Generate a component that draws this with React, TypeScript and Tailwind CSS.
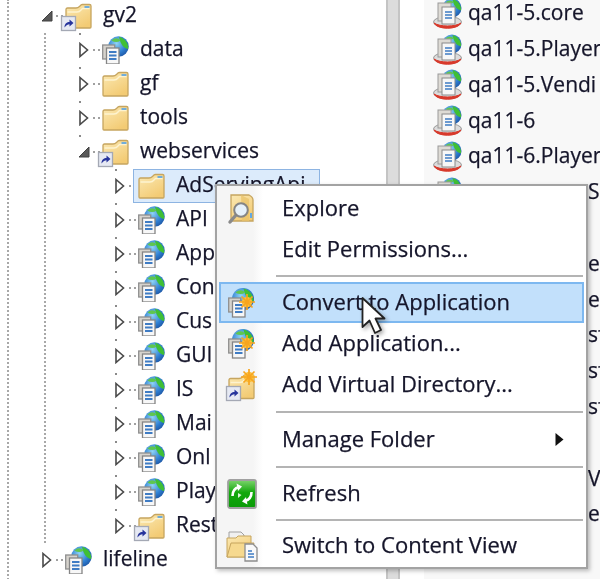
const Defs = () => (
    <svg className="absolute w-0 h-0" aria-hidden="true">
        <defs>
            <linearGradient id="folderFill" x1="0" y1="0" x2="0.6" y2="1">
                <stop offset="0" stopColor="#fbe9b4" />
                <stop offset="1" stopColor="#f3cb74" />
            </linearGradient>
            <radialGradient id="globeFill" cx="0.4" cy="0.35" r="0.75">
                <stop offset="0" stopColor="#8fd4f5" />
                <stop offset="0.6" stopColor="#2f7fd2" />
                <stop offset="1" stopColor="#1b4f9c" />
            </radialGradient>
            <linearGradient id="greenFill" x1="0" y1="0" x2="0" y2="1">
                <stop offset="0" stopColor="#7fd46f" />
                <stop offset="0.45" stopColor="#12a80c" />
                <stop offset="1" stopColor="#0a9a08" />
            </linearGradient>
        </defs>
    </svg>
);

const Folder = () => (
    <>
        <path d="M1 6 Q1 4.5 2.5 4.5 H11 Q13 4.5 14.5 3 L16 1.5 Q16.5 1 17.5 1 H24.5 Q26 1 26 2.5 V23.5 Q26 24.5 25 24.5 H2 Q1 24.5 1 23.5 Z" fill="url(#folderFill)" stroke="#c6a55f" strokeWidth="1.3" />
        <path d="M2.5 8.5 H12 Q14.5 8.5 16 6.5 L17.5 5 H24.5" stroke="#fdf3cf" strokeWidth="1.4" fill="none" />
        <rect x="19.5" y="2.6" width="5" height="1.8" fill="#62a8e2" />
    </>
);

const Badge = ({ x, y }: { x: number; y: number }) => (
    <g transform={`translate(${x} ${y})`}>
        <rect x="0.5" y="0.5" width="14" height="14" fill="#e6e9f3" stroke="#a4a8b4" strokeWidth="1.3" />
        <path d="M3.5 11.5 C3.5 7.5 6 6 8.5 6 V3.5 L12.5 7 L8.5 10.5 V8.2 C6.5 8.2 5.5 9 3.5 11.5 Z" fill="#27349c" />
    </g>
);

const FolderIcon = ({ shortcut }: { shortcut?: boolean }) => (
    <svg width="27" height="28" viewBox="0 0 27 28" className="shrink-0 overflow-visible">
        <g transform="translate(0 1.5)">
            <Folder />
        </g>
        {shortcut && <Badge x={-4} y={14} />}
    </svg>
);

const Globe = ({ cx, cy, r }: { cx: number; cy: number; r: number }) => (
    <g>
        <circle cx={cx} cy={cy} r={r} fill="url(#globeFill)" />
        <path
            d={`M${cx + r * 0.05} ${cy - r * 0.95} C${cx + r * 0.7} ${cy - r * 0.8} ${cx + r} ${cy - r * 0.2} ${cx + r * 0.95} ${cy + r * 0.25} C${cx + r * 0.6} ${cy + r * 0.2} ${cx + r * 0.2} ${cy - r * 0.1} ${cx + r * 0.05} ${cy - r * 0.95} Z`}
            fill="#3fbf35"
        />
        <path d={`M${cx - r * 0.7} ${cy - r * 0.6} Q${cx - r * 0.2} ${cy - r} ${cx + r * 0.2} ${cy - r * 0.6} Q${cx - r * 0.2} ${cy - r * 0.3} ${cx - r * 0.7} ${cy - r * 0.6} Z`} fill="#5fc64f" />
    </g>
);

const Pages = ({ x, y }: { x: number; y: number }) => (
    <g transform={`translate(${x} ${y})`}>
        <rect x="0.7" y="2" width="12" height="14" fill="#d6d3cd" stroke="#8f8f8f" strokeWidth="1.3" />
        <rect x="4.5" y="5" width="12.5" height="16" fill="#f7f7f7" stroke="#858585" strokeWidth="1.3" />
        <path d="M7 9 H14.5 M7 12.5 H14.5 M7 16 H14.5" stroke="#3f7cc4" strokeWidth="1.9" />
    </g>
);

const WebIcon = () => (
    <svg width="27" height="28" viewBox="0 0 27 28" className="shrink-0">
        <Globe cx={16.5} cy={10.5} r={10.2} />
        <Pages x={0} y={7} />
    </svg>
);

const Star = ({ cx, cy }: { cx: number; cy: number }) => (
    <g stroke="#f7a51f" strokeWidth="1.7">
        <circle cx={cx} cy={cy} r="5.2" fill="#fbbf3a" stroke="none" />
        <path d={`M${cx - 8} ${cy} H${cx + 8} M${cx} ${cy - 8} V${cy + 8} M${cx - 5.5} ${cy - 5.5} L${cx + 5.5} ${cy + 5.5} M${cx + 5.5} ${cy - 5.5} L${cx - 5.5} ${cy + 5.5}`} />
    </g>
);

const AppStarIcon = () => (
    <svg width="30" height="32" viewBox="0 0 30 32" className="shrink-0">
        <Globe cx={16} cy={12} r={11} />
        <Pages x={1} y={9} />
        <Star cx={20} cy={15} />
    </svg>
);

const VirtualDirIcon = () => (
    <svg width="32" height="32" viewBox="0 0 32 32" className="shrink-0 overflow-visible">
        <g transform="translate(2 5)">
            <Folder />
        </g>
        <Star cx={23} cy={8} />
        <Badge x={0} y={17} />
    </svg>
);

const ExploreIcon = () => (
    <svg width="30" height="32" viewBox="0 0 30 32" className="shrink-0">
        <path d="M4 2 H22 Q26 4 26 7 V28 H4 Z" fill="url(#folderFill)" stroke="#c6a55f" strokeWidth="1.3" />
        <path d="M14 2 L22 6 V28 H15 Z" fill="#eac36a" opacity="0.75" />
        <rect x="23" y="20" width="2" height="5" fill="#62a8e2" />
        <path d="M9 22 L3 29" stroke="#8a8a8a" strokeWidth="3.4" strokeLinecap="round" />
        <circle cx="14" cy="17" r="6.8" fill="#e6f1fa" stroke="#858585" strokeWidth="2" />
    </svg>
);

const RefreshIcon = () => (
    <svg width="30" height="30" viewBox="0 0 30 30" className="shrink-0">
        <rect x="1" y="1" width="28" height="28" rx="2" fill="url(#greenFill)" stroke="#a0a0a0" strokeWidth="1.8" />
        <path d="M5.5 17 C5.5 12 8 9 12 8" fill="none" stroke="#fff" strokeWidth="2.6" />
        <path d="M9.5 4.5 L15 7.5 L11 12 Z" fill="#fff" />
        <path d="M11 19 L14.5 16 L11 14 Z" fill="#d9f5d4" />
        <path d="M24.5 13 C24.5 18 22 21 18 22" fill="none" stroke="#fff" strokeWidth="2.6" />
        <path d="M20.5 25.5 L15 22.5 L19 18 Z" fill="#fff" />
    </svg>
);

const SwitchIcon = () => (
    <svg width="32" height="32" viewBox="0 0 32 32" className="shrink-0">
        <path d="M3 2 H15 L18 5 V12 H3 Z" fill="#f0f0f0" stroke="#a0a0a0" />
        <path d="M1 8 H10 L12 6 H25 V27 H1 Z" fill="url(#folderFill)" stroke="#c6a55f" />
        <path d="M1 27 L5 13 H28 L24 27 Z" fill="#f6d98f" stroke="#c6a55f" />
        <path d="M19 14 H27 L31 18 V31 H19 Z" fill="#f9f9f9" stroke="#8d8d8d" strokeWidth="1.3" />
        <path d="M22 21 H26 M22 24 H28 M22 27 H28" stroke="#3f7cc4" strokeWidth="1.5" />
    </svg>
);

// globe + pages standing on the red "started" ring, right hand list
const SiteIcon = () => (
    <svg width="30" height="32" viewBox="0 0 30 32" className="shrink-0">
        <Globe cx={19} cy={10} r={9.5} />
        <ellipse cx="14.5" cy="24" rx="14" ry="5.5" fill="#dcdcdc" stroke="#9b9b9b" />
        <path d="M1 25 C4 32 25 32 28 25 C22 29 7 29 1 25 Z" fill="#d8392b" stroke="#d8392b" />
        <rect x="5" y="5" width="13" height="18" fill="#dedbd5" stroke="#999" />
        <rect x="9" y="9" width="13" height="17" fill="#f7f7f7" stroke="#8a8a8a" />
        <path d="M12 14 H19 M12 17 H19 M12 20 H19" stroke="#3f7cc4" strokeWidth="1.6" />
    </svg>
);

const Arrow = ({ open }: { open?: boolean }) =>
    open ? (
        <svg width="12" height="12" viewBox="0 0 12 12">
            <path d="M1 11 H11 V1 Z" fill="#595959" stroke="#404040" />
        </svg>
    ) : (
        <svg width="10" height="16" viewBox="0 0 10 16" className="ml-[1px]">
            <path d="M1 1.5 L8.5 8 L1 14.5 Z" fill="#fff" stroke="#4a4a4a" strokeWidth="1.6" />
        </svg>
    );

interface TreeRowProps {
    pad: string;
    name: string;
    open?: boolean;
    dot?: boolean;
    selected?: boolean;
    icon: React.ReactNode;
}

const TreeRow = ({ pad, name, open, dot, selected, icon }: TreeRowProps) => (
    <div className={`flex items-center h-[34px] ${pad}`}>
        <div className="relative h-full w-[12px] shrink-0 flex items-center">
            <Arrow open={open} />
            {dot && <div className="absolute top-0 left-[1px] w-[2px] h-[2px] bg-[#8a8a8a]" />}
        </div>
        <div className="w-[12px] shrink-0 flex justify-center">
            <div className="w-[7px] border-t-2 border-dotted border-[#a0a0a0]" />
        </div>
        {selected ? (
            <div className="flex items-center h-[34px] w-[187px] -ml-[5px] pl-[4px] gap-[11px] bg-[#dcebfb] border border-[#8db4e2]">
                {icon}
                <span className="mb-[2px] text-[#15152a] whitespace-nowrap">{name}</span>
            </div>
        ) : (
            <div className="flex items-center gap-[11px]">
                {icon}
                <span className="mb-[2px] text-[#15152a] whitespace-nowrap">{name}</span>
            </div>
        )}
    </div>
);

const sites = ['qa11-5.core', 'qa11-5.Player', 'qa11-5.Vendi', 'qa11-6', 'qa11-6.Player', '', '', '', '', '', '', '', '', '', '', ''];
const trailing: Record<number, string> = { 5: 'S', 7: 'er', 8: 'er', 9: 'sf', 10: 'sf', 11: 'sf', 13: 'V', 14: 'er' };

const webservices = ['API', 'App', 'Con', 'Cus', 'GUI', 'IS', 'Mai', 'Onl', 'Play'];

const MenuItem = ({ icon, label, active, submenu }: { icon?: React.ReactNode; label: string; active?: boolean; submenu?: boolean }) => (
    <div className={`flex items-center h-[41px] pl-[5px] pr-[18px] border-2 ${active ? 'bg-[#c2e0fb] border-[#7db8f0]' : 'border-transparent'}`}>
        <div className="w-[31px] shrink-0 flex justify-center">{icon}</div>
        <span className="ml-[25px] mb-[2px] text-[22px] text-[#15152a] whitespace-nowrap">{label}</span>
        {submenu && (
            <svg width="9" height="13" viewBox="0 0 9 13" className="ml-auto">
                <path d="M0.5 0 L8.5 6.5 L0.5 13 Z" fill="#111" />
            </svg>
        )}
    </div>
);

const Separator = ({ h }: { h: string }) => (
    <div className={`flex items-center ${h} pl-[57px] pr-[1px]`}>
        <div className="w-full h-[2px] bg-[#b4b4b4]" />
    </div>
);

export default function App() {
    return (
        <div className="relative flex w-[600px] h-[579px] overflow-hidden bg-white text-[21px] font-['Open_Sans',sans-serif] [-webkit-text-stroke:0.25px] blur-[0.5px]">
            <Defs />
            {/* Tree pane */}
            <div className="w-[386px] shrink-0 h-full">
                <div className="-mt-px ml-[7px] h-[600px] border-l-2 border-dotted border-[#a8a8a8]">
                    <TreeRow pad="pl-[32px]" name="gv2" open icon={<FolderIcon shortcut />} />
                    <div className="ml-[35px] border-l-2 border-dotted border-[#a8a8a8]">
                        <TreeRow pad="pl-[32px]" name="data" dot icon={<WebIcon />} />
                        <TreeRow pad="pl-[32px]" name="gf" dot icon={<FolderIcon />} />
                        <TreeRow pad="pl-[32px]" name="tools" dot icon={<FolderIcon />} />
                        <TreeRow pad="pl-[32px]" name="webservices" open dot icon={<FolderIcon shortcut />} />
                        <TreeRow pad="pl-[68px]" name="AdServingApi" selected dot icon={<FolderIcon />} />
                        {webservices.map((name) => (
                            <TreeRow key={name} pad="pl-[68px]" name={name} dot icon={<WebIcon />} />
                        ))}
                        <TreeRow pad="pl-[68px]" name="Rest" dot icon={<FolderIcon shortcut />} />
                    </div>
                    <TreeRow pad="pl-[32px]" name="lifeline" icon={<WebIcon />} />
                </div>
            </div>

            {/* Splitter */}
            <div className="w-[14px] shrink-0 h-full bg-[#dcdcdc] border-x-2 border-[#c4c4c4]" />

            {/* Site list */}
            <div className="flex-1 min-w-0 h-full pl-[24px]">
                <div className="h-full bg-[#f8f8f8] overflow-hidden">
                    <div className="-mt-[4px] pl-[9px]">
                        {sites.map((site, i) => (
                            <div key={i} className="flex items-center h-[35.8px] gap-[5px]">
                                <SiteIcon />
                                <span className={`mb-[2px] text-[#15152a] whitespace-nowrap ${trailing[i] ? 'pl-[120px]' : ''}`}>{site || trailing[i]}</span>
                            </div>
                        ))}
                    </div>
                </div>
            </div>

            {/* Context menu */}
            <div className="absolute left-[215px] top-[184px] w-[373px] h-[385px] p-[2px] border-2 border-[#a3a3a3] bg-[linear-gradient(to_right,#f5f5f5_0,#f5f5f5_36px,#ffffff_46px)] shadow-[2px_2px_4px_rgba(0,0,0,0.25)]">
                <MenuItem icon={<ExploreIcon />} label="Explore" />
                <MenuItem label="Edit Permissions..." />
                <Separator h="h-[12px]" />
                <MenuItem icon={<AppStarIcon />} label="Convert to Application" active />
                <MenuItem icon={<AppStarIcon />} label="Add Application..." />
                <MenuItem icon={<VirtualDirIcon />} label="Add Virtual Directory..." />
                <Separator h="h-[14px]" />
                <MenuItem label="Manage Folder" submenu />
                <Separator h="h-[13px]" />
                <MenuItem icon={<RefreshIcon />} label="Refresh" />
                <Separator h="h-[11px]" />
                <MenuItem icon={<SwitchIcon />} label="Switch to Content View" />
            </div>

            {/* Mouse pointer */}
            <svg width="28" height="44" viewBox="0 0 28 44" className="absolute left-[361px] top-[297px] drop-shadow-[2px_2px_2px_rgba(0,0,0,0.35)]">
                <path d="M1.5 1 V30 L8.5 23.5 L14 36 L20 33 L14.5 21.5 H23.5 Z" fill="#fff" stroke="#222" strokeWidth="1.8" strokeLinejoin="round" />
            </svg>
        </div>
    );
}
